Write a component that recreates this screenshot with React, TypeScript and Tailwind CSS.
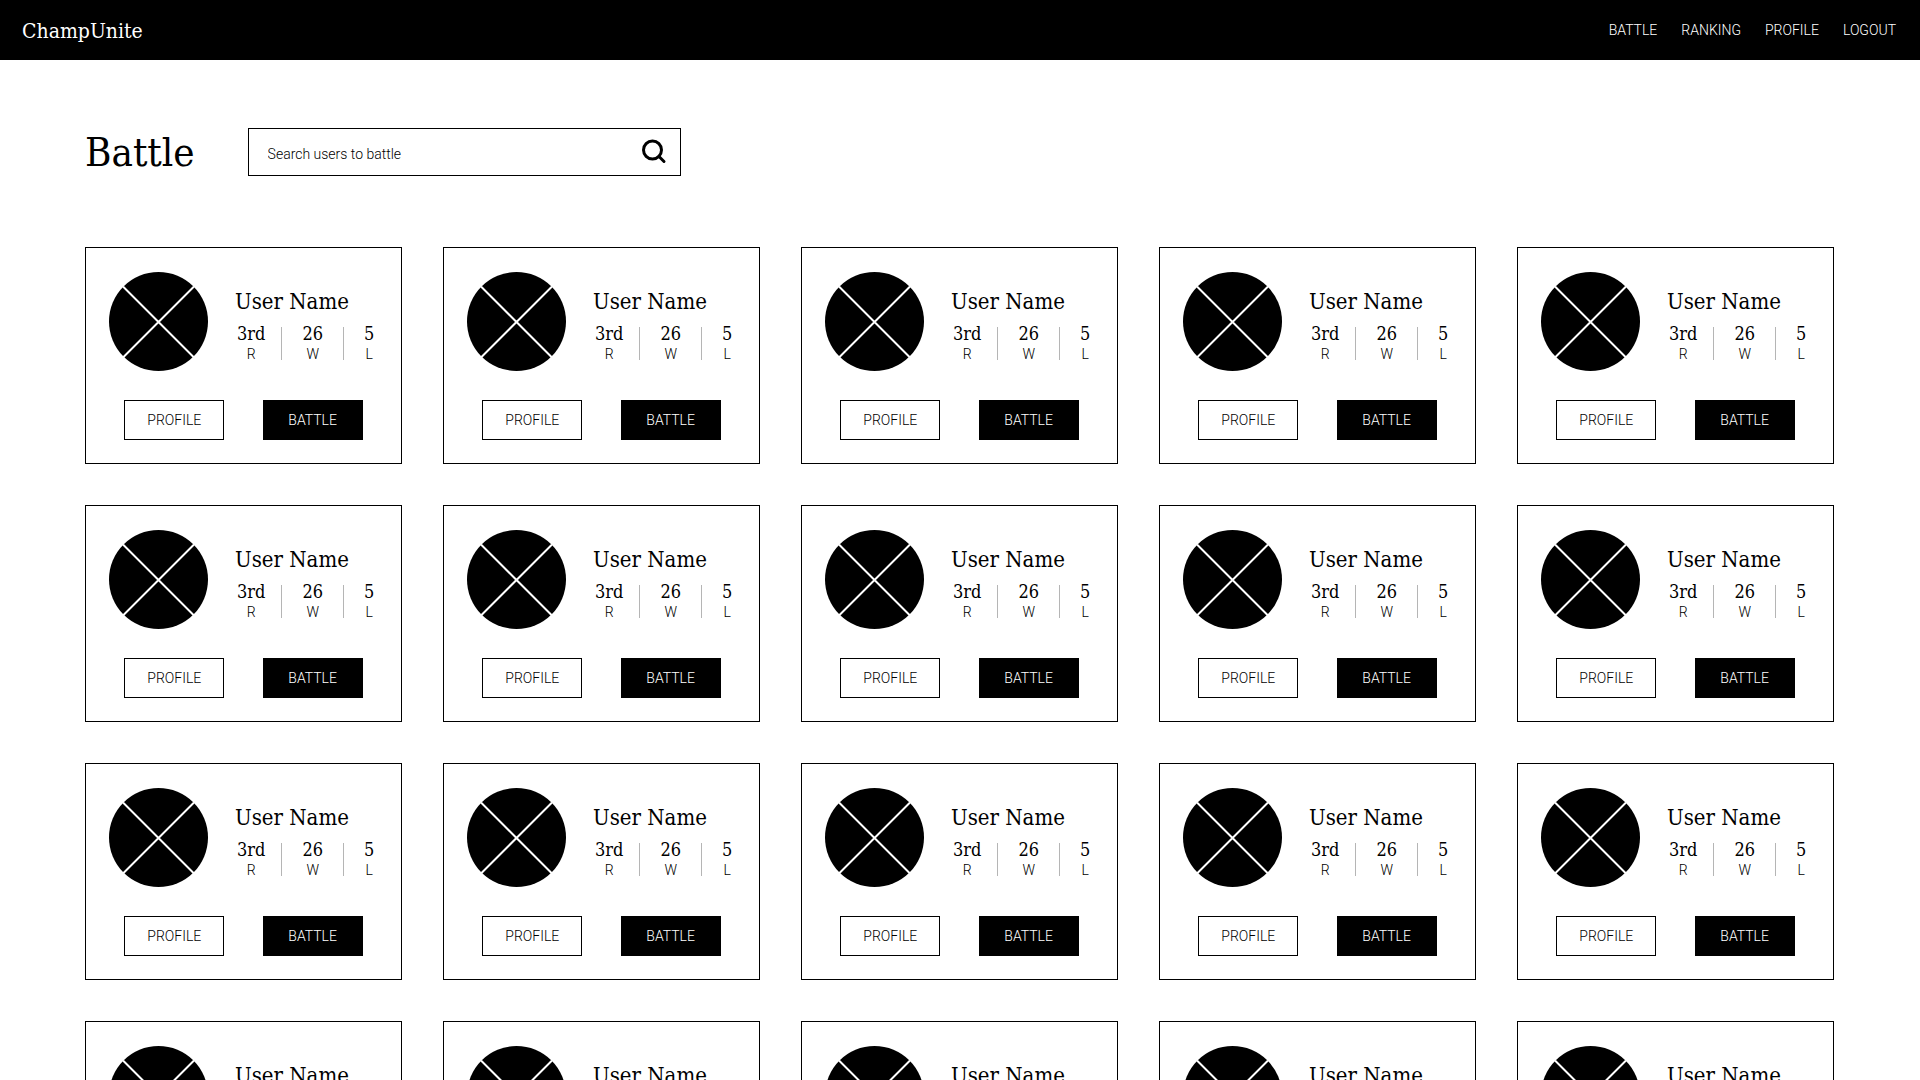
import React from "react";

const slab = "font-['Roboto_Slab','DejaVu_Serif_Condensed','DejaVu_Serif',serif]";

const navLinks = ["BATTLE", "RANKING", "PROFILE", "LOGOUT"];

const users = Array.from({ length: 20 }, (_, id) => ({
  id,
  name: "User Name",
  rank: "3rd",
  wins: 26,
  losses: 5,
}));

function Avatar() {
  return (
    <svg className="size-[99px] shrink-0" viewBox="0 0 99 99" aria-hidden="true">
      <circle cx="49.5" cy="49.5" r="49.5" fill="#000" />
      <path d="M14 14.5 85 85.5M85 14.5 14 85.5" stroke="#fff" strokeWidth="2" />
    </svg>
  );
}

function Stat({ value, label }: { value: string | number; label: string }) {
  return (
    <div className="flex flex-col items-center">
      <span className={`${slab} text-lg leading-[22px]`}>{value}</span>
      <span className="text-sm leading-[18px] font-light">{label}</span>
    </div>
  );
}

function UserCard({ user }: { user: (typeof users)[number] }) {
  return (
    <article className="border border-black pt-6 pb-[23px]">
      <div className="flex gap-[27px] pl-[23px]">
        <Avatar />
        <div className="pt-3.5">
          <h2 className={`${slab} text-[22px] leading-8 whitespace-nowrap`}>{user.name}</h2>
          <div className="mt-[5px] flex items-center gap-5 pl-0.5">
            <Stat value={user.rank} label="R" />
            <div className="-ml-1 h-[33px] w-px bg-[#b5b5b5]" />
            <Stat value={user.wins} label="W" />
            <div className="h-[33px] w-px bg-[#b5b5b5]" />
            <Stat value={user.losses} label="L" />
          </div>
        </div>
      </div>
      <div className="mt-[29px] flex justify-evenly">
        <button type="button" className="h-10 w-[100px] border border-black text-sm font-light">
          PROFILE
        </button>
        <button type="button" className="h-10 w-[100px] bg-black text-sm font-light text-white">
          BATTLE
        </button>
      </div>
    </article>
  );
}

export default function App() {
  return (
    <div className="min-h-screen bg-white pb-10 font-[Roboto,sans-serif] text-black">
      <header className="flex h-[60px] items-center justify-between bg-black pr-6 pl-[22px] text-white">
        <a href="#home" className={`${slab} pt-0.5 text-[21px] leading-8`}>
          ChampUnite
        </a>
        <nav className="flex gap-6 text-sm font-light">
          {navLinks.map((label) => (
            <a key={label} href={`#${label.toLowerCase()}`}>
              {label}
            </a>
          ))}
        </nav>
      </header>
      <main className="pr-[86px] pl-[85px]">
        <div className="flex items-center gap-[53px] pt-[68px]">
          <h1 className={`${slab} text-[40px] leading-[48px]`}>Battle</h1>
          <form role="search" className="flex h-12 w-[433px] items-center border border-black pr-3 pl-[19px]">
            <input
              type="search"
              aria-label="Search users to battle"
              placeholder="Search users to battle"
              className="min-w-0 flex-1 pt-1 text-sm font-light outline-none placeholder:text-black"
            />
            <button type="button" aria-label="Search">
              <svg className="size-7" viewBox="0 0 28 28" fill="none" stroke="#000" strokeWidth="3">
                <circle cx="12.5" cy="12" r="9" />
                <path d="m19 18.5 5 5" strokeLinecap="round" />
              </svg>
            </button>
          </form>
        </div>
        <div className="mt-[71px] grid grid-cols-5 gap-[41px]">
          {users.map((user) => (
            <UserCard key={user.id} user={user} />
          ))}
        </div>
      </main>
    </div>
  );
}
